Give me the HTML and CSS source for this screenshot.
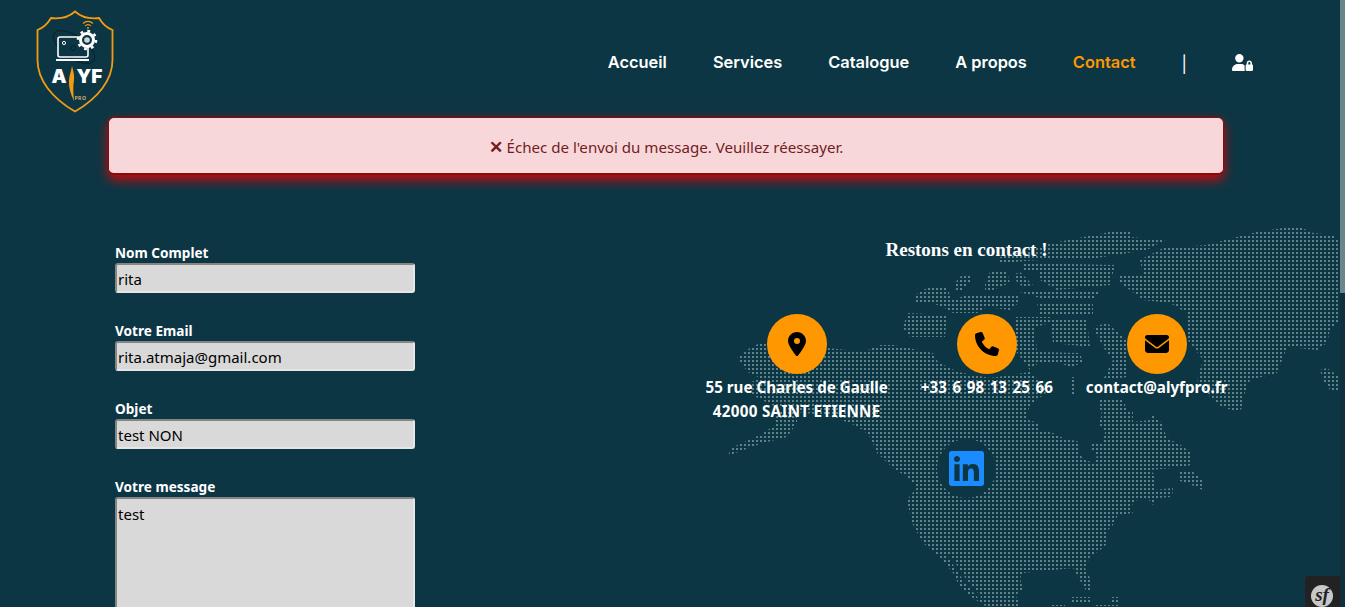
FILE: index.html
```html
<!DOCTYPE html>
<html lang="fr">

<head>
    <meta charset="UTF-8">
    <meta name="viewport" content="width=device-width, initial-scale=1.0">
    <title>Contact | ALYF Pro</title>
    <link rel="stylesheet" href="styles.css">
</head>

<body>
    <!-- dotted world map behind the contact column -->
    <svg class="map" viewBox="0 0 1340 607" aria-hidden="true">
        <defs>
            <pattern id="dots" width="4" height="4" patternUnits="userSpaceOnUse">
                <rect width="2" height="2" fill="#5f8188"></rect>
            </pattern>
        </defs>
        <g fill="url(#dots)">
            <polygon points="737,358 750,348 762,342 827,348 847,350 863,352 880,345 893,345 933,353 938,362 958,372 990,378 1030,372 1045,385 1047,392 1033,403 1028,410 1028,420 1040,423 1040,430 1053,433 1063,438 1080,442 1080,455 1085,460 1095,463 1097,455 1092,450 1090,443 1103,442 1105,432 1098,423 1102,415 1098,402 1100,399 1123,399 1127,410 1133,410 1133,422 1150,420 1153,415 1162,423 1165,433 1170,440 1178,443 1190,452 1192,465 1173,468 1150,470 1155,475 1155,490 1173,488 1172,497 1157,498 1153,505 1147,498 1137,500 1130,507 1133,513 1118,515 1113,525 1108,530 1108,543 1100,550 1090,557 1085,567 1073,568 1053,570 1023,573 1020,578 1023,590 1015,595 1020,602 1020,607 987,607 973,598 960,587 953,573 940,557 923,543 912,523 907,500 917,487 907,477 893,468 877,453 870,437 863,430 850,423 825,415 797,412 772,405 752,395 745,385 760,378 748,372"></polygon>
            <polygon points="797,412 797,423 787,437 763,443 730,455 726,458 733,447 760,435 775,425 775,412"></polygon>
            <polygon points="1073,568 1085,568 1092,582 1092,590 1087,592 1078,577"></polygon>
            <polygon points="1180,472 1193,472 1203,480 1203,490 1197,488 1192,485 1177,480"></polygon>
            <polygon points="1070,597 1090,597 1093,604 1070,604"></polygon>
            <polygon points="1110,597 1118,597 1118,604 1110,604"></polygon>
            <polygon points="1050,605 1065,605 1065,607 1050,607"></polygon>
            <polygon points="1095,605 1120,605 1120,607 1095,607"></polygon>
            <!-- arctic islands -->
            <polygon points="907,313 947,315 945,337 910,337 903,328"></polygon>
            <polygon points="915,295 927,288 947,288 952,300 967,295 1020,295 1020,302 1010,310 987,307 977,313 953,313 943,307 932,303 915,302"></polygon>
            <polygon points="955,283 962,275 970,275 970,282 962,290 955,290"></polygon>
            <polygon points="985,283 990,272 1007,272 1010,283 993,290 985,290"></polygon>
            <polygon points="1013,275 1020,272 1033,285 1023,287 1017,282"></polygon>
            <polygon points="997,258 1053,243 1120,230 1130,230 1130,237 1165,240 1147,250 1115,255 1085,260 1040,260 1000,263"></polygon>
            <polygon points="1023,263 1115,265 1110,285 1057,290 1040,280 1040,272 1023,272"></polygon>
            <polygon points="1020,292 1100,292 1092,300 1040,298"></polygon>
            <polygon points="1037,303 1093,303 1093,315 1040,315"></polygon>
            <polygon points="1050,320 1087,320 1090,347 1053,343"></polygon>
            <polygon points="1015,317 1050,317 1050,323 1035,327 1037,352 1080,353 1083,363 1070,367 1060,363 1040,362 1030,370 1015,350"></polygon>
            <polygon points="1093,327 1107,323 1127,340 1127,377 1103,380 1113,360 1103,347"></polygon>
            <polygon points="1070,377 1075,377 1075,395 1070,395"></polygon>
            <!-- greenland -->
            <polygon points="1225,240 1257,232 1290,227 1300,227 1313,233 1333,235 1340,243 1340,320 1330,330 1327,343 1317,350 1287,347 1277,373 1250,380 1243,397 1243,407 1238,412 1222,407 1210,397 1197,380 1203,360 1188,340 1187,313 1170,303 1143,300 1130,290 1120,283 1120,275 1143,275 1140,260 1163,248 1207,245"></polygon>
            <polygon points="1320,370 1327,368 1340,377 1340,392 1330,390 1323,380"></polygon>
        </g>
        <polyline class="map-gulf" points="949,556 965,580 980,598"></polyline>
    </svg>

    <header class="topbar">
        <a class="logo" href="#">
            <svg viewBox="0 0 78 104" width="78" height="104">
                <path d="M39 1.5C33 7 24 9 15 8C12 13 7 18 1.5 20L1.5 50C1.5 70 16 88 39 101.5C62 88 76.5 70 76.5 50L76.5 20C71 18 66 13 63 8C54 9 45 7 39 1.5Z" fill="none" stroke="#f39c12" stroke-width="1.8"></path>
                <ellipse cx="38" cy="37" rx="24" ry="11" transform="rotate(35 38 37)" fill="none" stroke="#08222c" stroke-width="1"></ellipse>
                <rect x="22" y="27" width="30" height="20" rx="2" fill="#0c3644" stroke="#fff" stroke-width="1.6"></rect>
                <rect x="20" y="49" width="33" height="2" fill="#fff"></rect>
                <circle cx="28" cy="33" r="1.6" fill="none" stroke="#fff"></circle>
                <circle cx="37" cy="38" r="2.4" fill="none" stroke="#08222c"></circle>
                <circle cx="51" cy="30" r="6.5" fill="#0c3644" stroke="#fff" stroke-width="3"></circle>
                <circle cx="51" cy="30" r="9" fill="none" stroke="#fff" stroke-width="2.6" stroke-dasharray="2.8 4.27"></circle>
                <circle cx="51" cy="30" r="2.8" fill="#cfd6d8"></circle>
                <path d="M47 13.5a7 7 0 0 1 10 0M49 16a4 4 0 0 1 6 0" fill="none" stroke="#f39c12" stroke-width="1.1"></path>
                <circle cx="52" cy="18" r="0.9" fill="#f39c12"></circle>
                <text class="logo-word" x="15.5" y="73">A</text>
                <text class="logo-word" x="40.5" y="73">YF</text>
                <path d="M36 56C37.5 62 39 66 37.5 74C37 80 37.5 86 38 91C34.5 84 32.5 77 33 70C33.3 65 35.5 60 36 56Z" fill="#f39c12"></path>
                <text class="logo-pro" x="38.5" y="90">PRO</text>
            </svg>
        </a>
        <nav class="nav">
            <a href="#">Accueil</a>
            <a href="#">Services</a>
            <a href="#">Catalogue</a>
            <a href="#">A propos</a>
            <a class="active" href="#">Contact</a>
            <span class="divider">|</span>
            <a class="user" href="#">
                <svg viewBox="0 0 640 512" width="21" height="17">
                    <path fill="#fff" d="M224 256A128 128 0 1 0 224 0a128 128 0 1 0 0 256zm-45.7 48C79.8 304 0 383.8 0 482.3C0 498.7 13.3 512 29.7 512H392.6c-5.4-9.4-8.6-20.3-8.6-32V352c0-2.1 .1-4.2 .3-6.3c-31-26-71-41.7-114.6-41.7H178.3zM528 240c17.7 0 32 14.3 32 32v48H496V272c0-17.7 14.3-32 32-32zm-80 32v48c-17.7 0-32 14.3-32 32V480c0 17.7 14.3 32 32 32H608c17.7 0 32-14.3 32-32V352c0-17.7-14.3-32-32-32V272c0-44.2-35.8-80-80-80s-80 35.8-80 80z"></path>
                </svg>
            </a>
        </nav>
    </header>

    <div class="alert"><span><b>✕</b> Échec de l'envoi du message. Veuillez réessayer.</span></div>

    <main class="contact">
        <form class="form">
            <div class="field">
                <label for="nom">Nom Complet</label>
                <input id="nom" type="text" value="rita">
            </div>
            <div class="field">
                <label for="email">Votre Email</label>
                <input id="email" type="text" value="rita.atmaja@gmail.com">
            </div>
            <div class="field">
                <label for="objet">Objet</label>
                <input id="objet" type="text" value="test NON">
            </div>
            <div class="field">
                <label for="message">Votre message</label>
                <textarea id="message">test</textarea>
            </div>
        </form>

        <section class="info">
            <h2>Restons en contact !</h2>
            <div class="items">
                <div class="item">
                    <span class="round">
                        <svg viewBox="0 0 384 512" width="18" height="24">
                            <path d="M215.7 499.2C267 435 384 279.4 384 192C384 86 298 0 192 0S0 86 0 192c0 87.4 117 243 168.3 307.2c12.3 15.3 35.1 15.3 47.4 0zM192 128a64 64 0 1 1 0 128 64 64 0 1 1 0-128z"></path>
                        </svg>
                    </span>
                    <p>55 rue Charles de Gaulle<br><span class="city">42000 SAINT ETIENNE</span></p>
                </div>
                <div class="item">
                    <span class="round">
                        <svg viewBox="0 0 512 512" width="24" height="24">
                            <path d="M164.9 24.6c-7.7-18.6-28-28.5-47.4-23.2l-88 24C12.1 30.2 0 46 0 64C0 311.4 200.6 512 448 512c18 0 33.8-12.1 38.6-29.5l24-88c5.3-19.4-4.6-39.7-23.2-47.4l-96-40c-16.3-6.8-35.2-2.1-46.3 11.6L304.7 368C234.3 334.7 177.3 277.7 144 207.3L193.3 167c13.7-11.2 18.4-30 11.6-46.3l-40-96z"></path>
                        </svg>
                    </span>
                    <p class="phone">+33 6 98 13 25 66</p>
                </div>
                <div class="item">
                    <span class="round">
                        <svg viewBox="0 0 512 512" width="24" height="24">
                            <path d="M48 64C21.5 64 0 85.5 0 112c0 15.1 7.1 29.3 19.2 38.4L236.8 313.6c11.4 8.5 27 8.5 38.4 0L492.8 150.4c12.1-9.1 19.2-23.3 19.2-38.4c0-26.5-21.5-48-48-48H48zM0 176V384c0 35.3 28.7 64 64 64H448c35.3 0 64-28.7 64-64V176L294.4 339.2c-22.8 17.1-54 17.1-76.8 0L0 176z"></path>
                        </svg>
                    </span>
                    <p>contact@alyfpro.fr</p>
                </div>
            </div>
            <a class="linkedin" href="#">
                <svg viewBox="0 32 448 448" width="35" height="35">
                    <path fill="#1a8cff" d="M416 32H31.9C14.3 32 0 46.5 0 64.3v383.4C0 465.5 14.3 480 31.9 480H416c17.6 0 32-14.5 32-32.3V64.3c0-17.8-14.4-32.3-32-32.3zM135.4 416H69V202.2h66.5V416zm-33.2-243c-21.3 0-38.5-17.3-38.5-38.5S80.9 96 102.2 96c21.2 0 38.5 17.3 38.5 38.5 0 21.3-17.2 38.5-38.5 38.5zm282.1 243h-66.4V312c0-24.8-.5-56.7-34.5-56.7-34.6 0-39.9 27-39.9 54.9V416h-66.4V202.2h63.7v29.2h.9c8.9-16.8 30.6-34.5 62.9-34.5 67.2 0 79.7 44.3 79.7 101.9V416z"></path>
                </svg>
            </a>
        </section>
    </main>

    <div class="sf-toolbar"><span class="sf-badge">sf</span></div>
    <div class="scrollbar"><div class="thumb"></div></div>
</body>

</html>
```

FILE: styles.css
```css
html {
    overflow: hidden;
}

body {
    margin: 0;
    height: 607px;
    overflow: hidden;
    background-color: #0c3644;
    color: white;
    font-family: "Noto Sans", "Open Sans", sans-serif;
}

.map {
    position: absolute;
    top: 0;
    left: 0;
    width: 1340px;
    height: 607px;
}

.map-gulf {
    fill: none;
    stroke: #0c3644;
    stroke-width: 3;
}

.topbar {
    position: relative;
    display: flex;
    justify-content: space-between;
    height: 117px;
    padding: 10px 92px 0 36px;
    box-sizing: border-box;
}

.logo {
    display: block;
    width: 78px;
    height: 104px;
}

.logo-word {
    font-family: "Inter", sans-serif;
    font-size: 19px;
    font-weight: 900;
    fill: white;
}

.logo-pro {
    font-family: "Noto Sans", sans-serif;
    font-size: 5.2px;
    font-weight: 700;
    letter-spacing: 0.4px;
    fill: #c9a86a;
}

.nav {
    display: flex;
    align-items: center;
    gap: 46px;
    height: 104px;
    font-family: "Inter", sans-serif;
    font-size: 16.4px;
    font-weight: 600;
}

.nav a {
    color: white;
    text-decoration: none;
}

.nav a.active {
    color: #ff9800;
}

.divider {
    font-weight: 400;
    margin-right: -1px;
    padding-top: 4px;
}

.user {
    display: flex;
}

.alert {
    position: relative;
    width: 1116px;
    height: 58px;
    margin-left: 108px;
    padding-top: 2px;
    box-sizing: border-box;
    display: flex;
    align-items: center;
    justify-content: center;
    background-color: #f8d7da;
    color: #721c24;
    font-size: 15.1px;
    border: 1px solid #8c0a0a;
    border-bottom-width: 2px;
    border-radius: 6px;
    box-shadow: 0 5px 12px rgba(235, 0, 0, 0.85);
}

.alert b {
    font-size: 16.5px;
}

.contact {
    position: relative;
    display: grid;
    grid-template-columns: 590px 523px;
    padding: 69px 0 0 115px;
}

.field {
    display: flex;
    flex-direction: column;
    width: 300px;
    margin-bottom: 29px;
}

.field label {
    margin-bottom: 1px;
    font-size: 13.6px;
    font-weight: 700;
    line-height: 18px;
}

.field input,
.field textarea {
    width: 300px;
    height: 30px;
    box-sizing: border-box;
    padding: 3px 1px 1px;
    font-family: "Noto Sans", sans-serif;
    font-size: 15px;
    color: black;
    background-color: #d9d9d9;
    border: 2px solid #e6e6e6;
    border-top-color: #858585;
    border-left-color: #858585;
    border-radius: 3px;
    outline: none;
}

.field textarea {
    height: 160px;
    padding-top: 5px;
    resize: none;
}

.info {
    display: flex;
    flex-direction: column;
    align-items: center;
}

.info h2 {
    margin: -6px 0 0;
    font-family: "Liberation Serif", "DejaVu Serif", serif;
    font-size: 19px;
    font-weight: 700;
    line-height: 24px;
}

.items {
    display: flex;
    gap: 33px;
    margin-top: 52px;
}

.item {
    display: flex;
    flex-direction: column;
    align-items: center;
    text-align: center;
}

.item p {
    margin: 1px 0 0;
    font-size: 15.2px;
    font-weight: 700;
    line-height: 24px;
}

.item .phone {
    word-spacing: 1.6px;
}

.city {
    letter-spacing: 0.3px;
}

.round {
    display: flex;
    align-items: center;
    justify-content: center;
    width: 60px;
    height: 60px;
    border-radius: 50%;
    background-color: #ff9800;
}

.linkedin {
    display: flex;
    align-items: center;
    justify-content: center;
    width: 59px;
    height: 59px;
    margin-top: 16px;
    border-radius: 50%;
    background-color: #0c3644;
}

.sf-toolbar {
    position: absolute;
    right: 5px;
    bottom: 0;
    width: 35px;
    height: 31px;
    border-top-left-radius: 4px;
    background-color: #222;
}

.sf-badge {
    position: absolute;
    left: 6px;
    top: 9px;
    width: 22px;
    height: 22px;
    border-radius: 50%;
    background-color: #c8c8c8;
    color: #222;
    font-family: "Liberation Serif", serif;
    font-style: italic;
    font-weight: 700;
    font-size: 19px;
    line-height: 20px;
    text-align: center;
}

.scrollbar {
    position: absolute;
    top: 0;
    right: 0;
    width: 5px;
    height: 607px;
    background-color: #0e2f3b;
}

.thumb {
    height: 293px;
    background-color: #6b858c;
}
```
